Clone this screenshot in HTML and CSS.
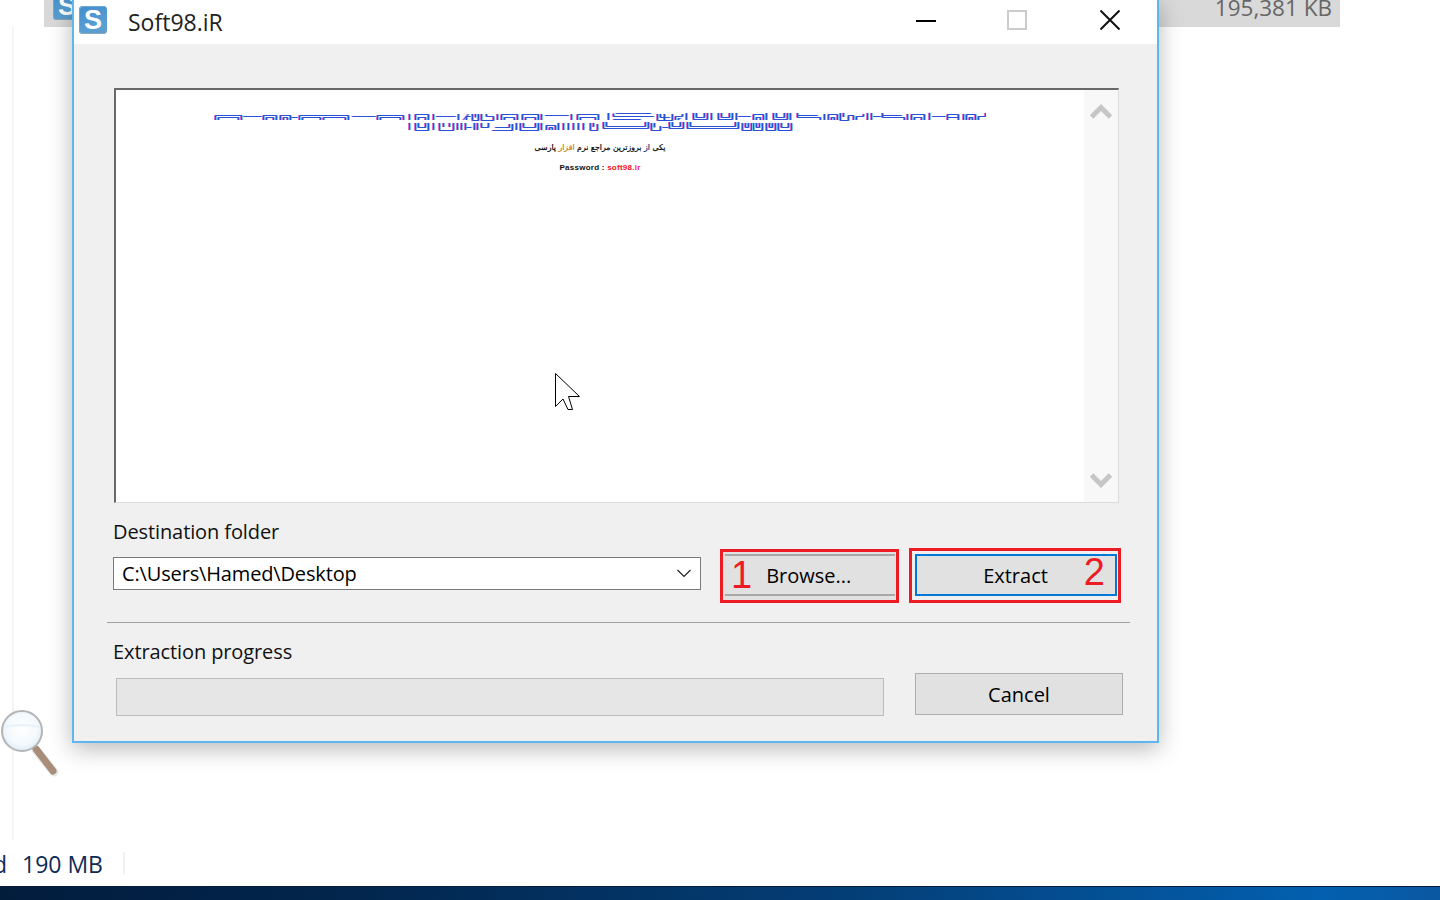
FILE: index.html
```html
<!DOCTYPE html>
<html lang="en">
<head>
<meta charset="utf-8">
<title>Soft98.iR</title>
<link rel="stylesheet" href="styles.css">
</head>
<body>
<div class="explorer">
  <div class="file-row">
    <div class="app-icon file-icon">S</div>
    <span class="file-size">195,381 KB</span>
  </div>
  <div class="explorer-main"></div>
  <div class="statusbar"><span class="status-cut">d</span><span class="status-size">190 MB</span><i class="status-sep"></i></div>
  <div class="taskbar"></div>
</div>

<svg class="magnifier" width="62" height="80" viewBox="0 0 62 80" aria-hidden="true">
  <defs>
    <radialGradient id="lens" cx="50%" cy="45%" r="55%">
      <stop offset="0" stop-color="#fff"/><stop offset="0.7" stop-color="#f4f9fd"/><stop offset="1" stop-color="#dfebf6"/>
    </radialGradient>
  </defs>
  <path d="M36 50 L54 72" stroke="#e8e8e8" stroke-width="9" stroke-linecap="round"/>
  <path d="M36 49 L53 71" stroke="#a88e7a" stroke-width="7" stroke-linecap="round"/>
  <circle cx="22" cy="31" r="20" fill="url(#lens)" stroke="#b4b4b4" stroke-width="2"/>
  <path d="M4 27 Q22 23 40 27" fill="none" stroke="#e8f1f9" stroke-width="2"/>
</svg>

<div class="dialog">
  <div class="titlebar">
    <div class="app-icon title-icon">S</div>
    <span class="title-text">Soft98.iR</span>
    <div class="win-controls">
      <svg class="ctl" width="20" height="20" viewBox="0 0 20 20" aria-hidden="true"><path d="M0 11H20" stroke="#000" stroke-width="2"/></svg>
      <svg class="ctl" width="20" height="20" viewBox="0 0 20 20" aria-hidden="true"><rect x="1" y="1" width="18" height="18" fill="none" stroke="#ccc" stroke-width="2"/></svg>
      <svg class="ctl ctl-close" width="20" height="20" viewBox="0 0 20 20" aria-hidden="true"><path d="M0.500 0.500L19.500 19.500M19.500 0.500L0.500 19.500" stroke="#111" stroke-width="2"/></svg>
    </div>
  </div>
  <div class="body">
    <div class="preview">
      <div class="preview-page">
        <svg class="garbled" width="772" height="20" viewBox="214 113 772 20" aria-hidden="true">
          <defs>
            <path id="gl" fill="none" d="
            M215 120V115.500H241V120M218 120V117.500H238V120
            M243 116.500H261
            M263 120V115.500H276V120M266 120V117.500H273V120
            M280 120V115.500H290V120M283 120V117.500H287V120M291 117.500H297
            M299 120V115.500H348V120M302 120V117.500H320V120M323 120V117.500H345V120
            M352 116.500H375
            M377 120V115.500H403V120M380 120V117.500H400V120
            M409 114V120
            M415 120V114.500H428V120M418 120V117.500H425V120
            M433 114V120M436 116.500H455M458 114V120
            M463 120L468 114M466 120V116.500H470M472 114V120.500H478V114M475 114V117.500
            M481 114V120.500H493V116.500H486V114
            M497 114V120
            M501 120V114.500H517V120M504 120V117.500H514V120
            M522 120V114.500H538V120M525 120V117.500H535V120
            M541 114V120M545 115.500H568M571 114V120
            M577 120V114.500H598V120M580 120V117.500H595V120
            M608 113V120
            M613 113.500V116.500H653M616 113.500H650V114M613 119.500H640
            M657 114V120.500H672V114M660 114V117.500H669M664 114V120
            M675 120V116.500H682V114M678 120V118.500H680
            M686 113V120
            M693 113V119.500H707V113M696 113V117.500H704V113
            M711 113V120
            M718 113V119.500H732V113M721 113V117.500H729V113
            M736 113V120M738 116.500H750
            M753 120V114.500H763V120M756 120V117.500H760V120
            M766 113V120
            M773 113V119.500H787V113M776 113V117.500H784V113
            M790 113V120
            M797 113V117.500H820V120M797 115.500H817
            M824 114V120
            M828 120V114.500H837V120M831 120V117.500H834V120
            M840 113V120.500H848V115.500H853V120M843 113V117
            M856 120V116.500H863V114
            M867 113V120M871 113V120M873 116.500H881
            M882 113V117.500H904V120M882 115.500H901
            M907 114V120
            M911 120V114.500H924V120M914 120V117.500H921V120
            M929 113V120M932 116.500H945
            M947 120V114.500H958V120M947 117.500H958
            M963 114V120
            M966 120V114.500H975V120M969 120V117.500H972V120
            M978 120V116.500H985V113
            M409 123V130
            M415 123V130.500H428V123M418 123V127.500H425V123
            M433 123V130
            M439 123V130.500H453V123M443 123V127M449 123V127
            M457 123V130M461 123V130M465 123V130
            M466 127.500H471M474 123V130
            M477 123V130M481 123V127.500H488V123
            M492 130.500H512V124M495 127.500H509V124
            M516 123V130
            M520 123V130.500H538V123M523 123V127.500H535V123
            M541 123V130
            M546 130V125.500H555V130M549 130V127.500H552V130
            M558 123V130M563 123V130M568 123V130M573 123V130M578 123V130M583 123V130
            M590 123V130.500H597V124M593 123V127
            M603 122V128.500H648V122M606 122V126.500H645V122
            M651 123V130.500H660V126M654 123V127.500M662 127.500H668
            M669 122V128.500H683V122M672 122V126.500H680V122
            M687 122V128.500H738V122M690 122V126.500H735V122
            M742 123V130.500H751V123M745 123V127.500H748V123
            M753 123V130.500H762V123M756 123V127.500H759V123
            M766 123V130.500H775V123M769 123V127.500H772V123
            M778 123V130.500H791V123M781 123V127.500H788V123"/>
          </defs>
          <use href="#gl" class="gl-pink"/>
          <use href="#gl" class="gl-cyan"/>
          <use href="#gl" class="gl-blue"/>
        </svg>
        <p class="fa-line" dir="rtl">یکی <span class="c-blue">از</span> بروزترین مراجع نرم <span class="c-orange">افزار</span> پارسی</p>
        <p class="pw-line">Password : <span class="c-red">soft98</span><span class="c-mag">.ir</span></p>
      </div>
      <div class="scroll">
        <svg width="22" height="16" viewBox="0 0 22 16" aria-hidden="true"><path d="M1.500 14L11 4.500L20.500 14" fill="none" stroke="#c6c6c6" stroke-width="5"/></svg>
        <svg width="22" height="16" viewBox="0 0 22 16" aria-hidden="true"><path d="M1.500 2L11 11.500L20.500 2" fill="none" stroke="#c6c6c6" stroke-width="5"/></svg>
      </div>
    </div>

    <label class="field-label dest-label">Destination folder</label>
    <div class="dest-row">
      <div class="combo">
        <span>C:\Users\Hamed\Desktop</span>
        <svg width="16" height="9" viewBox="0 0 16 9" aria-hidden="true"><path d="M1.500 1L8 7.500L14.500 1" fill="none" stroke="#222" stroke-width="1.200"/></svg>
      </div>
      <div class="frame frame-browse">
        <div class="btn btn-browse"><span class="num num-1">1</span><span>Browse...</span></div>
      </div>
      <div class="frame frame-extract">
        <div class="btn btn-extract"><span>Extract</span><span class="num num-2">2</span></div>
      </div>
    </div>
    <hr class="sep">
    <label class="field-label prog-label">Extraction progress</label>
    <div class="prog-row">
      <div class="progress"></div>
      <div class="btn btn-cancel">Cancel</div>
    </div>
  </div>
</div>

<svg class="cursor" width="28" height="40" viewBox="0 0 28 40" aria-hidden="true">
  <path d="M1.500 0.500V33.500L9 26L14 36.500H18.500L14.500 23.500H25.500Z" fill="#fff" stroke="#000" stroke-width="1"/>
</svg>
</body>
</html>
```
FILE: styles.css
```css
* { box-sizing: border-box; }
html, body { margin: 0; height: 100%; overflow: hidden; background: #fff; }
body { font-family: "Open Sans", "Noto Sans", sans-serif; color: #000; position: relative; width: 1440px; height: 900px; }

.explorer { display: flex; flex-direction: column; height: 900px; }
.file-row { margin-left: 44px; width: 1296px; height: 27px; background: #d9d9d9; display: flex; justify-content: space-between; align-items: flex-end; padding: 0 8px 0 9px; overflow: hidden; flex: none; }
.file-size { font-size: 22.500px; line-height: 27px; color: #666; position: relative; top: -6px; }
.file-icon { margin-bottom: 7px; }
.explorer-main { flex: none; height: 813px; margin-left: 12px; border-left: 2px solid #f4f4f4; }
.statusbar { flex: none; height: 46px; display: flex; align-items: flex-start; font-size: 23px; color: #0f2a55; padding-top: 11px; line-height: 26px; position: relative; left: -7px; }
.status-cut { width: 29px; }
.status-sep { width: 2px; height: 22px; background: #f2f2f2; margin-left: 20px; margin-top: 1px; }
.taskbar { flex: none; height: 14px; background: linear-gradient(90deg, #021c3c 0%, #02264e 25%, #043f78 60%, #0360b0 92%, #0a58a0 100%); border-top: 1px solid #0a1a3a; }

.app-icon { width: 28px; height: 28px; border-radius: 4px; background: linear-gradient(160deg, #3f8ccb, #5a9fd2 70%, #5c9ccb); box-shadow: inset 0 -1px 0 #8aa7bd, inset 1px 1px 0 #6ea9d6; color: #fff; font-family: "Liberation Sans", sans-serif; font-weight: 700; font-size: 27px; line-height: 28px; text-align: center; flex: none; }

.magnifier { position: absolute; left: 0; top: 700px; }
.cursor { position: absolute; left: 554px; top: 373px; }

.dialog { position: absolute; left: 72px; top: -2px; width: 1087px; height: 745px; border: 2px solid #5fb5ee; border-top: 0; background: #f0f0f0; box-shadow: 0 6px 22px rgba(0, 0, 0, 0.28); display: flex; flex-direction: column; }
.titlebar { flex: none; height: 46px; background: #fff; display: flex; align-items: center; padding: 2px 37px 0 5px; }
.title-icon { margin-top: -4px; }
.title-text { font-size: 23px; margin-left: 21px; color: #222; }
.win-controls { margin-left: auto; display: flex; gap: 71px; margin-top: -4px; }
.ctl-close { margin-left: 2px; }

.body { flex: 1; padding: 44px 0 0 39px; display: flex; flex-direction: column; }
.preview { width: 1005px; height: 415px; margin-left: 1px; background: #fff; border-top: 2px solid #696969; border-left: 2px solid #696969; border-right: 1px solid #dcdcdc; border-bottom: 1px solid #dcdcdc; display: flex; flex: none; }
.preview-page { flex: 1; display: flex; flex-direction: column; align-items: center; padding-top: 23px; }
.garbled { display: block; }
.gl-pink { stroke: #e070d0; transform: translateX(-0.5px); }
.gl-cyan { stroke: #70c8f0; transform: translateX(1.500px); }
.gl-blue { stroke: #2a50d8; transform: translateX(0.500px); }
.fa-line { margin: 9px 0 0; font-family: "DejaVu Sans", sans-serif; font-size: 7.800px; line-height: 12px; font-weight: 400; color: #000; -webkit-text-stroke: 0.2px #000; }
.pw-line { margin: 8px 0 0; font-family: "Liberation Sans", sans-serif; font-size: 8px; line-height: 12px; font-weight: 700; color: #111; letter-spacing: 0.250px; }
.c-blue { color: #102a70; -webkit-text-stroke-color: #102a70; }
.c-orange { color: #c77a10; -webkit-text-stroke-color: #c77a10; }
.c-red { color: #ff1020; }
.c-mag { color: #f0107a; }
.scroll { width: 34px; background: #f8f8f8; display: flex; flex-direction: column; justify-content: space-between; align-items: center; padding: 13px 0 13px; }

.field-label { font-size: 20px; line-height: 28px; display: block; color: #111; letter-spacing: -0.1px; }
.dest-label { margin-top: 15px; }
.dest-row { display: flex; align-items: flex-start; margin-top: 8px; position: relative; }
.combo { width: 588px; height: 33px; background: #fff; border: 1px solid #7a7a7a; margin-top: 3px; display: flex; align-items: center; justify-content: space-between; padding: 0 8px 0 8px; font-size: 20px; letter-spacing: -0.15px; }
.frame { border: 3px solid #ed1c24; flex: none; }
.frame-browse { width: 179px; height: 54px; margin-left: 19px; margin-top: -5px; padding: 2px 1px 4px 2px; background: #e1e1e1; }
.frame-extract { width: 212px; height: 55px; margin-left: 10px; margin-top: -6px; padding: 3px 1px 4px 3px; }
.btn { background: #e1e1e1; display: flex; align-items: center; font-size: 20px; height: 100%; }
.btn-browse { border-top: 2px solid #a8a8a8; border-bottom: 2px solid #a8a8a8; padding-left: 6px; }
.btn-extract { border: 2px solid #0078d7; justify-content: flex-end; padding-right: 10px; }
.num { color: #ed1c24; font-size: 38px; line-height: 40px; font-family: "Liberation Sans", sans-serif; font-weight: 400; }
.num-1 { margin-right: 14px; }
.num-2 { margin-left: 36px; margin-bottom: 6px; }
.sep { margin: 19px 0 0 -6px; width: 1023px; height: 1px; border: 0; background: #a0a0a0; flex: none; }
.prog-label { margin-top: 15px; }
.prog-row { display: flex; align-items: flex-start; }
.progress { width: 768px; height: 38px; margin: 12px 0 0 3px; background: #e6e6e6; border: 1px solid #bcbcbc; }
.btn-cancel { width: 208px; height: 42px; margin: 7px 0 0 31px; border: 1.500px solid #adadad; justify-content: center; }
```
